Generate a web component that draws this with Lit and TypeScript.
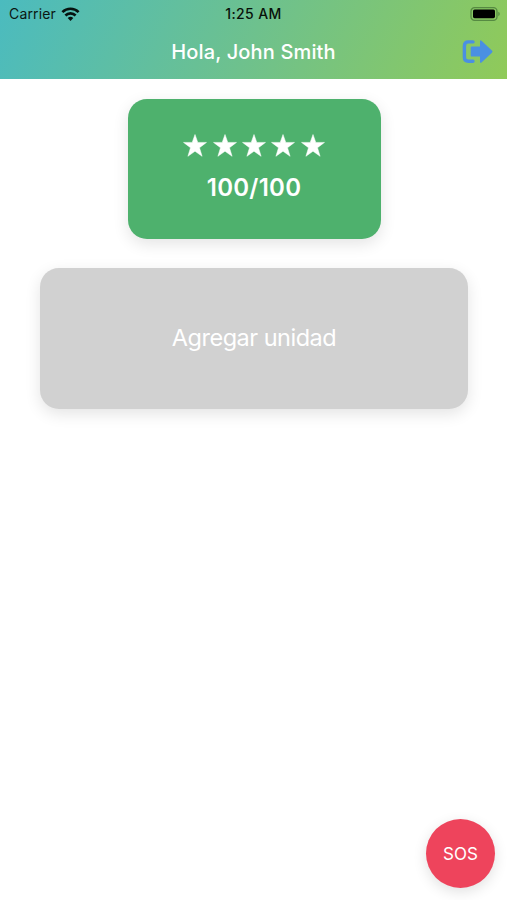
import { LitElement, html, css } from "lit";
import { customElement } from "lit/decorators.js";

@customElement("app-root")
export class AppRoot extends LitElement {
  static styles = css`
    :host {
      display: flex;
      flex-direction: column;
      position: relative;
      height: 900px;
      overflow: hidden;
      background: #fff;
      color: #fff;
      font-family: Inter, "Liberation Sans", sans-serif;
    }
    svg { display: block; }
    .header {
      height: 79px;
      flex: none;
      background: linear-gradient(115deg, #4bbbbf 0%, #6ec18d 50%, #90ca59 100%);
    }
    .status, .title {
      display: grid;
      grid-template-columns: 1fr auto 1fr;
      align-items: center;
    }
    .status {
      height: 27px;
      padding: 0 7px 0 9px;
      font-size: 14px;
      color: #0b1712;
    }
    .left { display: flex; align-items: center; gap: 5.5px; }
    .carrier { letter-spacing: 0.15px; }
    .time { font-weight: 500; letter-spacing: 0.4px; margin-right: 2px; color: #08110a; }
    .end { justify-self: end; }
    .title { height: 50px; padding: 0 14px; }
    h1 {
      grid-column: 2;
      margin: 0;
      font-size: 20px;
      font-weight: 550;
      letter-spacing: 0.15px;
      white-space: nowrap;
    }
    main {
      display: flex;
      flex-direction: column;
      align-items: center;
      gap: 29px;
      padding: 20px 39px 0 40px;
    }
    .card {
      box-sizing: border-box;
      height: 140px;
      border-radius: 19px;
      display: flex;
      flex-direction: column;
      align-items: center;
      justify-content: center;
      box-shadow: 0 5px 16px rgba(0, 0, 0, 0.11);
    }
    .score { width: 253px; background: #4eb16d; gap: 14px; padding-top: 1px; }
    .stars { display: flex; gap: 5.3px; }
    .points { font-size: 24px; line-height: 34px; font-weight: 600; letter-spacing: 0.25px; }
    .add {
      width: 428px;
      height: 141px;
      background: #d1d1d1;
      font-size: 23.5px;
      letter-spacing: -0.5px;
      padding-bottom: 2px;
    }
    .sos {
      position: absolute;
      right: 12px;
      bottom: 12px;
      width: 69px;
      height: 69px;
      border-radius: 50%;
      background: #ee445c;
      display: flex;
      align-items: center;
      justify-content: center;
      font-size: 17px;
      box-shadow: 0 4px 14px rgba(0, 0, 0, 0.12);
    }
  `;

  render() {
    return html`
      <header class="header">
        <div class="status">
          <div class="left">
            <span class="carrier">Carrier</span>
            <svg width="19" height="14" viewBox="0 0 18 14" fill="none" stroke="#06120f" stroke-width="2.6">
              <path d="M.9 5.1a11.5 11.5 0 0 1 16.2 0" />
              <path d="M3.9 8.5a7.2 7.2 0 0 1 10.2 0" />
              <path d="M9 13.9 6.2 11a4 4 0 0 1 5.6 0Z" fill="#06120f" stroke="none" />
            </svg>
          </div>
          <span class="time">1:25 AM</span>
          <svg class="end" width="30" height="14" viewBox="0 0 30 14">
            <rect x="1" y=".7" width="26" height="12.6" rx="3.6" fill="none" stroke="#568a42" stroke-width="1.3" />
            <rect x="3" y="2.6" width="22" height="8.6" rx="1.6" fill="#000" />
            <path d="M28.3 4.8a2.4 2.4 0 0 1 0 4.4Z" fill="#568a42" />
          </svg>
        </div>
        <div class="title">
          <h1>Hola, John Smith</h1>
          <svg class="end" width="31" height="24" viewBox="0 0 31 24">
            <path d="M11 1.9H6.4Q2.4 1.9 2.4 5.9v11.4q0 4 4 4h4.6" fill="none" stroke="#4a90e2" stroke-width="3.4" stroke-linecap="round" />
            <path d="M9.9 6.6H18V1.7q0-2.3 1.8-.8l10.1 9.5q1.2 1.2 0 2.4l-10.1 9.5q-1.8 1.5-1.8-.8v-4.9H9.9q-1.2 0-1.2-1.2V7.8q0-1.2 1.2-1.2Z" fill="#4a90e2" />
          </svg>
        </div>
      </header>
      <main>
        <section class="card score">
          <div class="stars">
            ${[1, 2, 3, 4, 5].map(
              () => html`<svg width="24" height="23" viewBox="0 0 24 23" fill="#fff" stroke="#fff" stroke-width=".5" stroke-linejoin="round">
                <path d="M12 .5l2.8 7.9h8.7l-7 5.3 2.6 8.6L12 17.2l-7.1 5.1 2.6-8.6-7-5.3h8.7Z" />
              </svg>`
            )}
          </div>
          <div class="points">100/100</div>
        </section>
        <section class="card add">Agregar unidad</section>
      </main>
      <div class="sos">SOS</div>
    `;
  }
}
